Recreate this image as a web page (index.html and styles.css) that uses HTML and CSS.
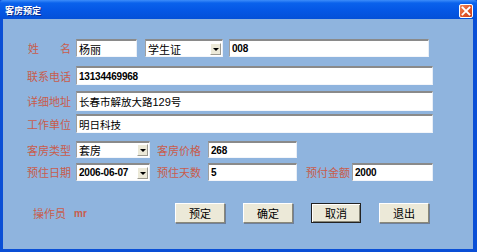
FILE: index.html
```html
<!DOCTYPE html>
<html lang="zh-CN">
<head>
<meta charset="utf-8">
<title>客房预定</title>
<link rel="stylesheet" href="styles.css">
</head>
<body>
<div class="window">
  <div class="titlebar">
    <span class="title">客房预定</span>
    <span class="close">
      <svg width="10" height="10" viewBox="0 0 10 10"><path d="M1.5 1.5 L8.5 8.5 M8.5 1.5 L1.5 8.5" stroke="#fff" stroke-width="1.8" stroke-linecap="square"/></svg>
    </span>
  </div>
  <div class="content">
    <div class="row r1">
      <div class="lbl lbl-split"><span>姓</span><span>名</span></div>
      <div class="field w-name">杨丽</div>
      <div class="select w-id"><span>学生证</span><span class="dd"></span></div>
      <div class="field w-idno num">008</div>
    </div>
    <div class="row r2">
      <div class="lbl">联系电话</div>
      <div class="field w-full num">13134469968</div>
    </div>
    <div class="row r3">
      <div class="lbl">详细地址</div>
      <div class="field w-full">长春市解放大路<span class="dg">129</span>号</div>
    </div>
    <div class="row r4">
      <div class="lbl">工作单位</div>
      <div class="field w-full">明日科技</div>
    </div>
    <div class="row r5">
      <div class="lbl">客房类型</div>
      <div class="select w-sel"><span>套房</span><span class="dd"></span></div>
      <div class="lbl lbl-mid">客房价格</div>
      <div class="field w-mid num">268</div>
    </div>
    <div class="row r6">
      <div class="lbl">预住日期</div>
      <div class="select w-sel"><span class="num">2006-06-07</span><span class="dd"></span></div>
      <div class="lbl lbl-mid">预住天数</div>
      <div class="field w-mid num">5</div>
      <div class="lbl lbl-pay">预付金额</div>
      <div class="field w-pay num">2000</div>
    </div>
    <div class="row r7">
      <div class="lbl lbl-op">操作员</div>
      <div class="op-name">mr</div>
      <div class="buttons">
        <button class="btn">预定</button>
        <button class="btn">确定</button>
        <button class="btn btn-focus">取消</button>
        <button class="btn">退出</button>
      </div>
    </div>
  </div>
</div>
</body>
</html>
```
FILE: styles.css
```css
* { box-sizing: border-box; }
html, body { margin: 0; padding: 0; }
body {
  width: 477px;
  height: 252px;
  overflow: hidden;
  font-family: "Liberation Sans", "Noto Sans CJK SC", sans-serif;
}
.window {
  width: 477px;
  height: 252px;
  display: flex;
  flex-direction: column;
  background: #0a4fd6;
  padding: 0 4px 3px 3px;
}
.titlebar {
  height: 19px;
  margin: 0 -4px 0 -3px;
  padding: 0 4px 0 5px;
  display: flex;
  align-items: center;
  justify-content: space-between;
  background: linear-gradient(#3d8dfa 0, #0a62ec 3px, #0558e6 50%, #0450d8 100%);
  border-radius: 3px 3px 0 0;
}
.title {
  color: #fff;
  font-family: "Noto Sans CJK SC", sans-serif;
  font-weight: 700;
  font-size: 9px;
  text-shadow: 1px 1px 0 #0a2a8a;
  margin-top: 1px;
}
.close {
  width: 14px;
  height: 14px;
  margin-top: 2px;
  border: 1px solid #fff;
  border-radius: 2px;
  background: linear-gradient(135deg, #f08a5c 0%, #e2582c 50%, #c8401c 100%);
  display: flex;
  align-items: center;
  justify-content: center;
}
.close svg { display: block; }
.content {
  flex: 1;
  background: #8fb4de;
  padding: 20px 0 0 24px;
  display: flex;
  flex-direction: column;
}
.row {
  display: flex;
  align-items: center;
}
.r1 { height: 18px; }
.r2 { height: 19px; margin-top: 9px; }
.r3 { height: 20px; margin-top: 6px; }
.r4 { height: 19px; margin-top: 3px; }
.r5 { height: 17px; margin-top: 8px; }
.r6 { height: 18px; margin-top: 5px; }
.r7 { height: 20px; margin-top: 22px; }

.lbl {
  width: 45px;
  margin-right: 4px;
  color: #c85c4c;
  font-family: "Noto Sans CJK SC", sans-serif;
  font-size: 11px;
  line-height: 14px;
  white-space: nowrap;
}
.lbl-split {
  display: flex;
  justify-content: space-between;
  padding: 0 1px;
}
.lbl-mid { margin-left: 7px; margin-right: 6px; }
.lbl-pay { margin-left: 9px; margin-right: 1px; }
.lbl-op { margin-left: 6px; width: 31px; margin-right: 10px; }

.field, .select {
  height: 100%;
  background: #fff;
  border-top: 2px solid #8a8a8a;
  border-left: 1px solid #a0a0a0;
  border-right: 1px solid #e8eef6;
  border-bottom: 1px solid #f4f6fa;
  font-family: "Liberation Sans", "Noto Sans CJK SC", sans-serif;
  font-size: 10.5px;
  color: #000;
  padding: 0 2px;
  display: flex;
  align-items: center;
  white-space: nowrap;
}
.num {
  font-weight: 700;
  font-size: 10px;
  letter-spacing: -0.2px;
}
.dg { font-size: 11px; }
.select {
  justify-content: space-between;
  padding-right: 1px;
}
.dd {
  width: 11px;
  height: 12px;
  background: #ece9d8;
  border-left: 1px solid #fff;
  border-top: 1px solid #fff;
  border-right: 1px solid #9c9a90;
  border-bottom: 1px solid #9c9a90;
  position: relative;
}
.dd::after {
  content: "";
  position: absolute;
  left: 2px;
  top: 4px;
  border-left: 3px solid transparent;
  border-right: 3px solid transparent;
  border-top: 3px solid #000;
}
.w-name { width: 61px; margin-right: 8px; font-size: 11px; }
.w-id { width: 78px; margin-right: 6px; font-size: 11px; }
.w-idno { width: 200px; }
.w-full { width: 357px; }
.w-sel { width: 74px; font-size: 11px; }
.w-mid { width: 89px; }
.w-pay { width: 81px; }

.op-name {
  width: 12px;
  color: #c85c4c;
  font-weight: 700;
  font-size: 10px;
  font-family: "Liberation Sans", sans-serif;
}
.buttons {
  display: flex;
  gap: 18px;
  margin-left: 89px;
  height: 100%;
}
.btn {
  width: 50px;
  height: 20px;
  padding: 0;
  margin: 0;
  background: #ece9d8;
  border-top: 1px solid #fff;
  border-left: 1px solid #fff;
  border-right: 1px solid #8a8878;
  border-bottom: 1px solid #8a8878;
  box-shadow: 1px 1px 0 #6f7f99;
  font-family: "Noto Sans CJK SC", sans-serif;
  font-size: 11px;
  color: #000;
  line-height: 16px;
}
.btn-focus {
  border: 1px solid #222;
  box-shadow: inset 1px 1px 0 #fff, inset -1px -1px 0 #8a8878;
}
```
